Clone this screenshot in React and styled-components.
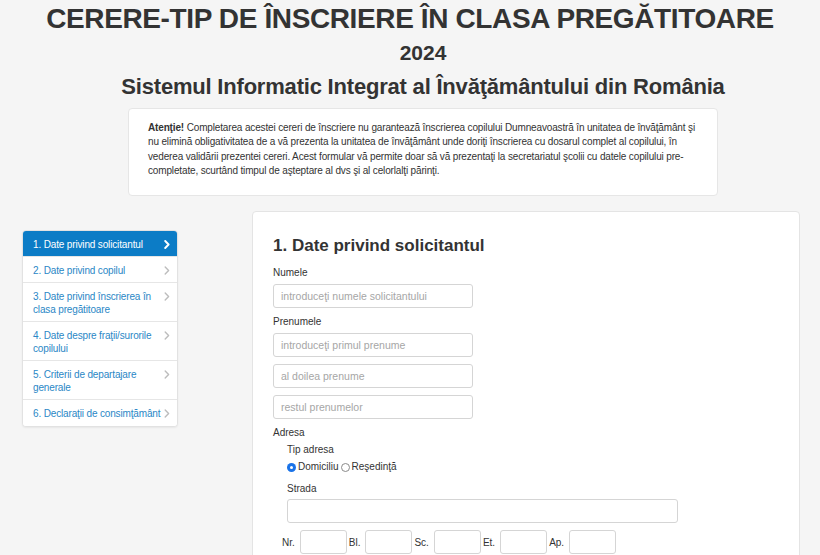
import React from "react";
import styled, { createGlobalStyle } from "styled-components";

const Global = createGlobalStyle`
  html, body { margin: 0; padding: 0; background: #f5f5f5; }
  body { font-family: "Liberation Sans", Arial, Helvetica, sans-serif; color: #333; }
  * { box-sizing: border-box; }
`;

const Page = styled.div`
  width: 820px;
  height: 555px;
  overflow: hidden;
  display: flex;
  flex-direction: column;
`;

const Title = styled.h1`
  margin: 0;
  padding-top: 4px;
  text-align: center;
  font-size: 28px;
  line-height: 30px;
  letter-spacing: -0.38px;
  font-weight: 700;
  color: #333;
  white-space: nowrap;
`;

const Intro = styled.div`
  padding-left: 26px;
  display: flex;
  flex-direction: column;
  align-items: center;
`;

const Year = styled.h2`
  margin: 7px 0 0;
  font-size: 21px;
  line-height: 24px;
  font-weight: 700;
  color: #333;
`;

const Subtitle = styled.h2`
  margin: 10px 0 0;
  font-size: 22px;
  line-height: 24px;
  letter-spacing: -0.2px;
  font-weight: 700;
  color: #333;
  white-space: nowrap;
`;

const Notice = styled.div`
  margin-top: 9px;
  width: 590px;
  height: 88px;
  background: #fff;
  border: 1px solid #e6e6e6;
  border-radius: 4px;
  padding: 12px 19px 0 19px;
  font-size: 10px;
  letter-spacing: -0.15px;
  line-height: 14.3px;
  color: #333;
  white-space: nowrap;
  b { font-weight: 700; }
`;

const Body = styled.div`
  margin-top: 15px;
  display: flex;
  align-items: flex-start;
  padding-left: 22px;
  gap: 74px;
`;

const Sidebar = styled.nav`
  margin-top: 19px;
  width: 156px;
  background: #fff;
  border: 1px solid #e2e2e2;
  border-radius: 4px;
  box-shadow: 0 1px 2px rgba(0,0,0,0.06);
  overflow: hidden;
  display: flex;
  flex-direction: column;
`;

const NavItem = styled.a`
  display: flex;
  justify-content: space-between;
  align-items: flex-start;
  padding: 6.5px 7px 6.5px 10px;
  font-size: 10px;
  letter-spacing: -0.15px;
  line-height: 13px;
  color: ${p => (p.$active ? "#fff" : "#2a87c6")};
  background: ${p => (p.$active ? "#0c7cc6" : "#fff")};
  border-top: ${p => (p.$first ? "none" : "1px solid #e6e6e6")};
  margin-top: ${p => (p.$first ? "0" : "-1px")};
  text-decoration: none;
  span { flex: 1; padding-right: 3px; }
  svg { flex: none; margin-top: 2px; }
`;

const Chevron = ({ active }) => (
  <svg width="6" height="9" viewBox="0 0 6 9">
    <path
      d="M1.2 1 L4.6 4.5 L1.2 8"
      fill="none"
      stroke={active ? "#fff" : "#bdbdbd"}
      strokeWidth={active ? 1.9 : 1.4}
      strokeLinecap="round"
      strokeLinejoin="round"
    />
  </svg>
);

const Panel = styled.section`
  width: 548px;
  height: 400px;
  background: #fff;
  border: 1px solid #e4e4e4;
  border-radius: 4px;
  padding: 24px 20px 0 20px;
`;

const Heading = styled.h3`
  margin: 0 0 10px;
  font-size: 17px;
  line-height: 20px;
  font-weight: 700;
  color: #333;
`;

const Label = styled.div`
  font-size: 10px;
  line-height: 14px;
  color: #333;
  margin-bottom: ${p => p.$mb ?? 4}px;
`;

const Input = styled.input`
  display: block;
  width: ${p => p.$w || 200}px;
  height: 24px;
  border: 1px solid #d5d5d5;
  border-radius: 3px;
  padding: 0 7px;
  font-family: inherit;
  font-size: 10.5px;
  color: #333;
  margin-bottom: ${p => p.$mb ?? 7}px;
  background: #fff;
  &::placeholder { color: #a6a6a6; }
`;

const Sub = styled.div`
  padding-left: 14px;
`;

const RadioRow = styled.div`
  display: flex;
  align-items: center;
  font-size: 10px;
  line-height: 14px;
  height: 14px;
  margin-bottom: 8px;
`;

const RadioOpt = styled.label`
  display: flex;
  align-items: center;
  gap: 2px;
  margin-right: 2px;
`;

const Dot = styled.span`
  position: relative;
  width: 9px;
  height: 9px;
  border-radius: 50%;
  border: ${p => (p.$on ? "none" : "1px solid #8a8a8a")};
  background: ${p => (p.$on ? "#1a73e8" : "#fff")};
  &::after {
    content: "";
    display: ${p => (p.$on ? "block" : "none")};
    position: absolute;
    left: 3px;
    top: 3px;
    width: 3px;
    height: 3px;
    border-radius: 50%;
    background: #fff;
  }
`;

const AddrRow = styled.div`
  display: flex;
  align-items: center;
  margin-left: -5px;
  font-size: 10px;
`;

const AddrLabel = styled.span`
  margin-right: 5px;
  margin-left: ${p => p.$ml ?? 2}px;
`;

const items = [
  "1. Date privind solicitantul",
  "2. Date privind copilul",
  "3. Date privind înscrierea în clasa pregătitoare",
  "4. Date despre fraţii/surorile copilului",
  "5. Criterii de departajare generale",
  "6. Declaraţii de consimţământ",
];

export default function App() {
  return (
    <Page>
      <Global />
      <Title>CERERE-TIP DE ÎNSCRIERE ÎN CLASA PREGĂTITOARE</Title>
      <Intro>
        <Year>2024</Year>
        <Subtitle>Sistemul Informatic Integrat al Învăţământului din România</Subtitle>
        <Notice>
          <b>Atenţie!</b> Completarea acestei cereri de înscriere nu garantează înscrierea copilului Dumneavoastră în unitatea de învăţământ şi
          <br />
          nu elimină obligativitatea de a vă prezenta la unitatea de învăţământ unde doriţi înscrierea cu dosarul complet al copilului, în
          <br />
          vederea validării prezentei cereri. Acest formular vă permite doar să vă prezentaţi la secretariatul şcolii cu datele copilului pre-
          <br />
          completate, scurtând timpul de aşteptare al dvs şi al celorlalţi părinţi.
        </Notice>
      </Intro>
      <Body>
        <Sidebar>
          {items.map((t, i) => (
            <NavItem key={t} $active={i === 0} $first={i === 0}>
              <span>{t}</span>
              <Chevron active={i === 0} />
            </NavItem>
          ))}
        </Sidebar>
        <Panel>
          <Heading>1. Date privind solicitantul</Heading>
          <Label>Numele</Label>
          <Input placeholder="introduceţi numele solicitantului" />
          <Label>Prenumele</Label>
          <Input placeholder="introduceţi primul prenume" />
          <Input placeholder="al doilea prenume" />
          <Input placeholder="restul prenumelor" />
          <Label $mb={3}>Adresa</Label>
          <Sub>
            <Label $mb={3}>Tip adresa</Label>
            <RadioRow>
              <RadioOpt><Dot $on />Domiciliu</RadioOpt>
              <RadioOpt><Dot />Reşedinţă</RadioOpt>
            </RadioRow>
            <Label $mb={3}>Strada</Label>
            <Input $w={391} />
            <AddrRow>
              <AddrLabel $ml={0}>Nr.</AddrLabel>
              <Input $w={47} $mb={0} />
              <AddrLabel>Bl.</AddrLabel>
              <Input $w={47} $mb={0} />
              <AddrLabel>Sc.</AddrLabel>
              <Input $w={47} $mb={0} />
              <AddrLabel>Et.</AddrLabel>
              <Input $w={47} $mb={0} />
              <AddrLabel>Ap.</AddrLabel>
              <Input $w={47} $mb={0} />
            </AddrRow>
          </Sub>
        </Panel>
      </Body>
    </Page>
  );
}
